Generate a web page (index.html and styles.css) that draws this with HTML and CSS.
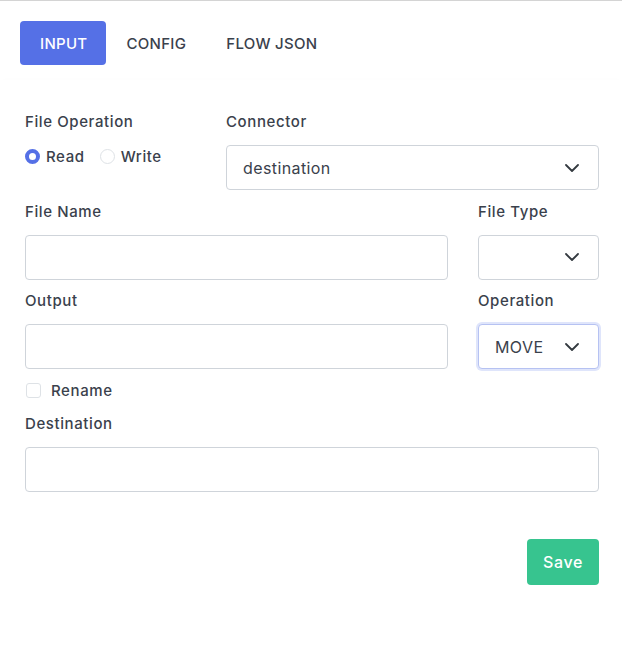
FILE: index.html
```html
<!DOCTYPE html>
<html>
<head>
<meta charset="utf-8">
<link rel="stylesheet" href="styles.css">
</head>
<body>
<div class="page">
  <nav class="tabs">
    <span class="tab active">INPUT</span>
    <span class="tab">CONFIG</span>
    <span class="tab">FLOW JSON</span>
  </nav>
  <section class="card">
    <div class="row row-first">
      <div class="field">
        <div class="label">File Operation</div>
        <div class="radios">
          <span class="radio checked"><span class="dot"></span>Read</span>
          <span class="radio"><span class="dot"></span>Write</span>
        </div>
      </div>
      <div class="field">
        <div class="label">Connector</div>
        <div class="control select"><span>destination</span><svg class="chev" width="14" height="8" viewBox="0 0 14 8"><path d="M1 1l6 6 6-6" fill="none" stroke="#343a40" stroke-width="1.8" stroke-linecap="round" stroke-linejoin="round"/></svg></div>
      </div>
    </div>
    <div class="row row-split">
      <div class="field">
        <div class="label">File Name</div>
        <div class="control"></div>
      </div>
      <div class="field">
        <div class="label">File Type</div>
        <div class="control select"><span></span><svg class="chev" width="14" height="8" viewBox="0 0 14 8"><path d="M1 1l6 6 6-6" fill="none" stroke="#343a40" stroke-width="1.8" stroke-linecap="round" stroke-linejoin="round"/></svg></div>
      </div>
    </div>
    <div class="row row-split">
      <div class="field">
        <div class="label">Output</div>
        <div class="control"></div>
      </div>
      <div class="field">
        <div class="label">Operation</div>
        <div class="control select focus"><span>MOVE</span><svg class="chev" width="14" height="8" viewBox="0 0 14 8"><path d="M1 1l6 6 6-6" fill="none" stroke="#343a40" stroke-width="1.8" stroke-linecap="round" stroke-linejoin="round"/></svg></div>
      </div>
    </div>
    <div class="check"><span class="box"></span>Rename</div>
    <div class="field">
      <div class="label">Destination</div>
      <div class="control"></div>
    </div>
    <div class="actions"><span class="save">Save</span></div>
  </section>
</div>
</body>
</html>
```
FILE: styles.css
```css
* { box-sizing: border-box; }
html, body { margin: 0; padding: 0; background: #fff; }
body {
  font-family: Inter, "Open Sans", sans-serif;
  color: #3a414c;
  font-size: 15px;
  letter-spacing: 0.6px;
}
.page {
  border-top: 1px solid #d4d4d4;
  padding-top: 20px;
}
.tabs {
  display: flex;
  padding-left: 20px;
}
.tab {
  height: 44px;
  padding: 0 20px;
  display: flex;
  align-items: center;
  font-size: 15px;
  font-weight: 450;
  letter-spacing: 0.3px;
  color: #3a414c;
  border-radius: 4px;
}
.tab.active {
  background: #5570e6;
  color: #fff;
  padding: 0 19px 0 20px;
}
.card {
  margin-top: 15px;
  padding: 31px 23px 12px 25px;
  background: #fff;
  box-shadow: 0 22px 20px rgba(0,0,0,0.06), 0 0 8px rgba(0,0,0,0.012);
}
.row { display: grid; column-gap: 30px; }
.row-first { grid-template-columns: 171px 1fr; }
.row-split { grid-template-columns: 1fr 121px; }
.field { display: flex; flex-direction: column; }
.label {
  line-height: 22px;
  margin-bottom: 12px;
  font-weight: 450;
}
.row + .row { margin-top: 10.5px; }
.field + .actions { margin-top: 47px; }
.control {
  height: 45px;
  border: 1px solid #cfd4da;
  border-radius: 4px;
  background: #fff;
}
.select {
  display: flex;
  align-items: center;
  justify-content: space-between;
  padding: 0 19px 0 16px;
  font-size: 16px;
  font-weight: 400;
  letter-spacing: 0.4px;
}
.select .chev { flex: none; }
.focus {
  border-color: #b6c2f2;
  box-shadow: 0 0 0 2px #dfe5fb;
}
.radios {
  display: flex;
  align-items: center;
  gap: 15px;
  height: 22px;
}
.radio {
  display: flex;
  align-items: center;
  gap: 6px;
  font-weight: 450;
}
.radio .dot {
  width: 15px;
  height: 15px;
  border-radius: 50%;
  border: 1px solid #dee2e6;
  background: #fff;
}
.radio.checked .dot {
  border: 4px solid #5570e6;
}
.check {
  display: flex;
  align-items: center;
  gap: 10px;
  height: 22px;
  margin-top: 10px;
  margin-bottom: 12px;
  font-weight: 450;
  padding-left: 1px;
}
.check .box {
  width: 15px;
  height: 15px;
  border: 1px solid #dee2e6;
  border-radius: 3px;
}
.actions { display: flex; justify-content: flex-end; }
.save {
  height: 46px;
  width: 72px;
  display: flex;
  align-items: center;
  justify-content: center;
  background: #37c48f;
  color: #fff;
  border-radius: 4px;
  font-size: 16px;
  font-weight: 450;
}
```
